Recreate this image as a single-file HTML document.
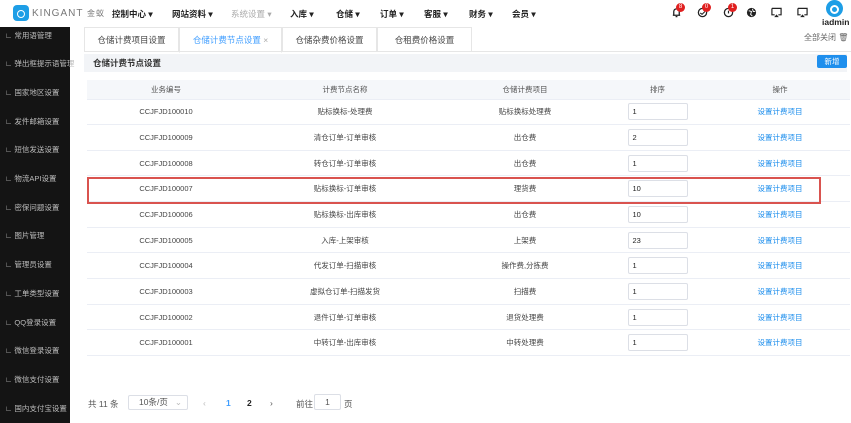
<!DOCTYPE html>
<html><head><meta charset="utf-8"><style>
*{margin:0;padding:0;box-sizing:border-box}
body{width:851px;height:423px;overflow:hidden;background:#fff;font-family:"Liberation Sans","Noto Sans CJK SC",sans-serif;font-size:8px;color:#333;position:relative}
.top{position:absolute;left:0;top:0;width:851px;height:27px;background:#fff}
.logo{position:absolute;left:13px;top:5px;width:16px;height:16px;border-radius:4px;background:#1e9ee6}
.logo:after{content:"";position:absolute;left:4px;top:5px;width:6px;height:6px;border:1.5px solid #fff;border-radius:50%}
.brand{position:absolute;left:32px;top:8px;font-size:10px;color:#777;letter-spacing:1px}
.nav{position:absolute;top:8px;font-size:8.5px;font-weight:bold;color:#222}
.side{position:absolute;left:0;top:27px;width:70px;height:396px;background:#141414}
.si{position:absolute;left:5px;font-size:7.5px;color:#bbb;white-space:nowrap}
.tabs{position:absolute;left:84px;top:27px;width:767px;height:25px;border-bottom:1px solid #e6e6e6}
.tab{position:absolute;top:0;height:25px;border:1px solid #e6e6e6;border-bottom:none;font-size:8.5px;color:#444;text-align:center;line-height:24px}
.hdr{position:absolute;left:84px;top:54px;width:763px;height:18px;background:#f2f4f7;font-size:8.5px;font-weight:bold;line-height:18px;padding-left:9px}
.btn{position:absolute;left:817px;top:55px;width:30px;height:13px;background:#1f8fed;color:#fff;font-size:7.5px;text-align:center;line-height:13px;border-radius:2px}
table{position:absolute;left:87px;top:80px;width:763px;border-collapse:collapse;font-size:7.5px}
td,th{height:25.67px;text-align:center;border-bottom:1px solid #ebeef5;font-weight:normal;color:#444}
th{height:19px;background:#f5f7fa;color:#555}
.inp{display:inline-block;width:60px;height:17px;border:1px solid #dcdfe6;border-radius:2px;text-align:left;padding-left:4px;line-height:15px;vertical-align:middle;color:#222}
a{color:#1f8fed;text-decoration:none}
.red{position:absolute;left:87px;top:177px;width:734px;height:27px;border:2px solid #d9534f}
.pg{position:absolute;top:398px;font-size:8.5px;color:#555}
.badge{position:absolute;top:3px;width:9px;height:9px;border-radius:50%;background:#e02020;color:#fff;font-size:6px;text-align:center;line-height:9px}
.ic{position:absolute;top:7px;width:11px;height:11px}
</style></head><body>
<div class="top">
<div class="logo"></div><div class="brand">KINGANT <span style="font-size:8px">金蚁</span></div>
<div class="nav" style="left:112px">控制中心 ▾</div>
<div class="nav" style="left:172px">网站资料 ▾</div>
<div class="nav" style="left:231px;color:#aaa;font-weight:normal">系统设置 ▾</div>
<div class="nav" style="left:290px">入库 ▾</div>
<div class="nav" style="left:336px">仓储 ▾</div>
<div class="nav" style="left:380px">订单 ▾</div>
<div class="nav" style="left:424px">客服 ▾</div>
<div class="nav" style="left:469px">财务 ▾</div>
<div class="nav" style="left:512px">会员 ▾</div>
<svg class="ic" style="left:671px" viewBox="0 0 12 12"><path d="M3 9V5a3 3 0 016 0v4H2h8M5 10.5h2" fill="none" stroke="#222" stroke-width="1.4"/></svg><div class="badge" style="left:676px">8</div>
<svg class="ic" style="left:697px" viewBox="0 0 12 12"><circle cx="6" cy="6" r="4.5" fill="none" stroke="#222" stroke-width="1.4"/><path d="M3.5 6.5l2 1.5 3-3" fill="none" stroke="#222" stroke-width="1.2"/></svg><div class="badge" style="left:702px">0</div>
<svg class="ic" style="left:723px" viewBox="0 0 12 12"><circle cx="6" cy="6" r="4.5" fill="none" stroke="#222" stroke-width="1.4"/><path d="M6 4v3" stroke="#222" stroke-width="1.3"/></svg><div class="badge" style="left:728px">1</div>
<svg class="ic" style="left:746px" viewBox="0 0 12 12"><circle cx="6" cy="6" r="5" fill="#222"/><path d="M3 4l3 1-1 3 2 2M7 2l1 3 2 0" stroke="#fff" stroke-width="1" fill="none"/></svg>
<svg class="ic" style="left:771px" viewBox="0 0 12 12"><path d="M1 1.5h10v7H8M4 8.5H1v-7" fill="none" stroke="#222" stroke-width="1.3"/><path d="M3.5 11l2.5-3 2.5 3z" fill="#222"/></svg>
<svg class="ic" style="left:797px" viewBox="0 0 12 12"><path d="M1 1.5h10v7H8M4 8.5H1v-7" fill="none" stroke="#222" stroke-width="1.3"/><path d="M3.5 11l2.5-3 2.5 3z" fill="#222"/></svg>
<div style="position:absolute;left:826px;top:0;width:17px;height:17px;border-radius:50%;background:#1e9ee6"><div style="position:absolute;left:4px;top:5px;width:9px;height:9px;border:2px solid #fff;border-radius:50%"></div></div>
<div style="position:absolute;left:822px;top:17px;font-size:8.5px;font-weight:bold;color:#222">iadmin</div>
</div>
<div class="side">
<div class="si" style="top:3px">∟ 常用语管理</div>
<div class="si" style="top:31px">∟ 弹出框提示语管理</div>
<div class="si" style="top:60px">∟ 国家地区设置</div>
<div class="si" style="top:89px">∟ 发件邮箱设置</div>
<div class="si" style="top:117px">∟ 短信发送设置</div>
<div class="si" style="top:146px">∟ 物流API设置</div>
<div class="si" style="top:175px">∟ 密保问题设置</div>
<div class="si" style="top:203px">∟ 图片管理</div>
<div class="si" style="top:232px">∟ 管理员设置</div>
<div class="si" style="top:261px">∟ 工单类型设置</div>
<div class="si" style="top:290px">∟ QQ登录设置</div>
<div class="si" style="top:318px">∟ 微信登录设置</div>
<div class="si" style="top:347px">∟ 微信支付设置</div>
<div class="si" style="top:376px">∟ 国内支付宝设置</div>
</div>
<div class="tabs">
<div class="tab" style="left:0;width:95px">仓储计费项目设置</div>
<div class="tab" style="left:95px;width:103px;color:#409eff;border-bottom:1px solid #fff;height:26px">仓储计费节点设置 <span style="color:#aaa">×</span></div>
<div class="tab" style="left:198px;width:95px">仓储杂费价格设置</div>
<div class="tab" style="left:293px;width:95px">仓租费价格设置</div>
<div style="position:absolute;left:720px;top:5px;font-size:8px;color:#666">全部关闭 🗑</div>
</div>
<div class="hdr">仓储计费节点设置</div>
<div class="btn">新增</div>
<table>
<tr><th style="width:158px">业务编号</th><th style="width:200px">计费节点名称</th><th style="width:160px">仓储计费项目</th><th style="width:105px">排序</th><th>操作</th></tr>
<tr><td>CCJFJD100010</td><td>贴标换标-处理费</td><td>贴标换标处理费</td><td><span class="inp">1</span></td><td><a>设置计费项目</a></td></tr>
<tr><td>CCJFJD100009</td><td>清仓订单-订单审核</td><td>出仓费</td><td><span class="inp">2</span></td><td><a>设置计费项目</a></td></tr>
<tr><td>CCJFJD100008</td><td>转仓订单-订单审核</td><td>出仓费</td><td><span class="inp">1</span></td><td><a>设置计费项目</a></td></tr>
<tr><td>CCJFJD100007</td><td>贴标换标-订单审核</td><td>理货费</td><td><span class="inp">10</span></td><td><a>设置计费项目</a></td></tr>
<tr><td>CCJFJD100006</td><td>贴标换标-出库审核</td><td>出仓费</td><td><span class="inp">10</span></td><td><a>设置计费项目</a></td></tr>
<tr><td>CCJFJD100005</td><td>入库-上架审核</td><td>上架费</td><td><span class="inp">23</span></td><td><a>设置计费项目</a></td></tr>
<tr><td>CCJFJD100004</td><td>代发订单-扫描审核</td><td>操作费,分拣费</td><td><span class="inp">1</span></td><td><a>设置计费项目</a></td></tr>
<tr><td>CCJFJD100003</td><td>虚拟仓订单-扫描发货</td><td>扫描费</td><td><span class="inp">1</span></td><td><a>设置计费项目</a></td></tr>
<tr><td>CCJFJD100002</td><td>退件订单-订单审核</td><td>退货处理费</td><td><span class="inp">1</span></td><td><a>设置计费项目</a></td></tr>
<tr><td>CCJFJD100001</td><td>中转订单-出库审核</td><td>中转处理费</td><td><span class="inp">1</span></td><td><a>设置计费项目</a></td></tr>
</table>
<div class="red"></div>
<div class="pg" style="left:88px">共 11 条</div>
<div class="pg" style="left:128px;top:395px;width:60px;height:15px;border:1px solid #dcdfe6;border-radius:2px;padding-left:10px;line-height:13px">10条/页 <span style="color:#bbb;float:right;margin-right:5px">⌄</span></div>
<div class="pg" style="left:203px;color:#bbb">‹</div>
<div class="pg" style="left:226px;color:#409eff;font-weight:bold">1</div>
<div class="pg" style="left:247px;font-weight:bold;color:#222">2</div>
<div class="pg" style="left:270px">›</div>
<div class="pg" style="left:296px">前往</div>
<div class="pg" style="left:314px;top:394px;width:27px;height:16px;border:1px solid #dcdfe6;border-radius:2px;text-align:center;line-height:14px">1</div>
<div class="pg" style="left:344px">页</div>
</body></html>
